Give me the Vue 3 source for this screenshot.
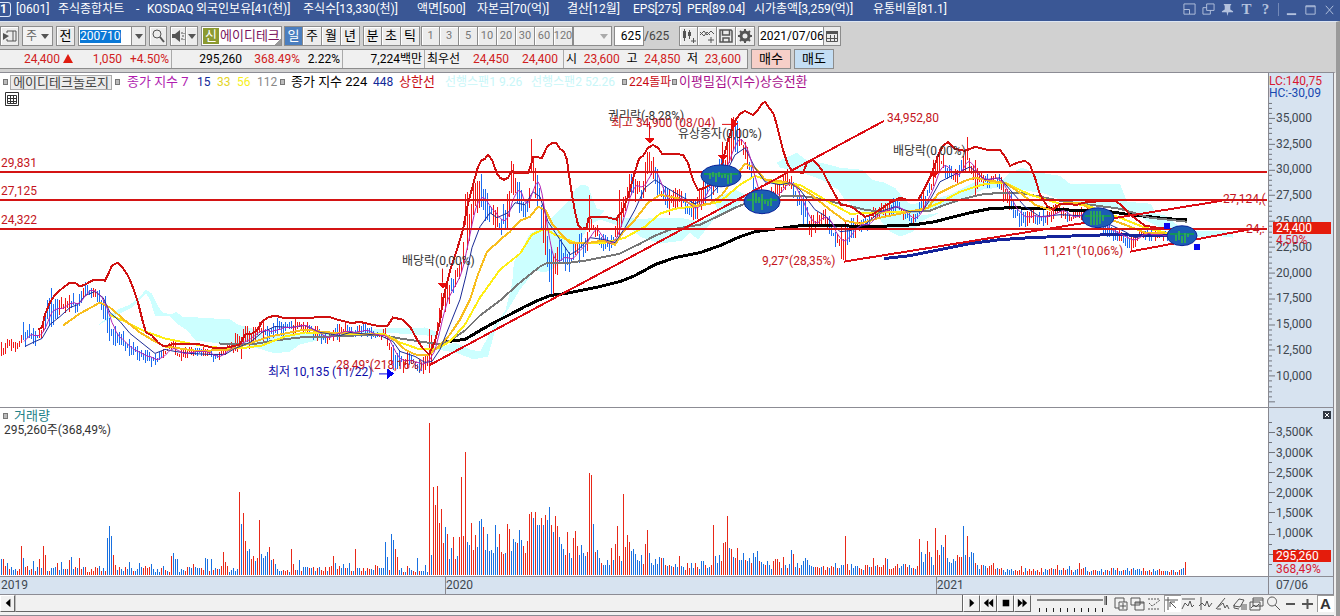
<script setup>
import { ref } from 'vue'

const titleParts = ['[0601]', '주식종합차트', '-', 'KOSDAQ', '외국인보유[41(천)]', '주식수[13,330(천)]', '액면[500]', '자본금[70(억)]', '결산[12월]', 'EPS[275]', 'PER[89.04]', '시가총액[3,259(억)]', '유통비율[81.1]']
const periods = ['일', '주', '월', '년']
const intraday = ['분', '초', '틱']
const minutes = ['1', '3', '5', '10', '20', '30', '60', '120']
const code = ref('200710')
const count = ref('625')
const date = ref('2021/07/06')
const zoomLevel = ref(100)

/* Plot areas, in chart units */
const PRICE = { x: 0, y: 73, w: 1268, h: 335 }
const VOL = { x: 0, y: 409, w: 1268, h: 167 }

const curves = [
  { name: 'ma448', color: '#14239a', width: 3, pts: '884,259 910,256 940,250 970,244 1000,240 1030,238 1080,236 1110,235 1165,236 1190,236' },
  { name: 'ma224', color: '#000', width: 3, pts: '443,343 455,341 465,340 480,331 498,321 510,315 525,307 540,300 550,296 565,294 580,291 600,287 620,282 635,276 655,265 675,258 700,253 720,246 740,237 755,232 770,230 785,228 800,226 840,226 870,227 895,226 915,225 935,222 950,218 970,213 990,209 1010,208 1050,209 1080,211 1110,212 1130,215 1150,217 1165,219 1187,220' },
  { name: 'ma112', color: '#777', width: 2, pts: '219,344 240,345 258,344 275,341 300,338 330,337 355,336 385,336 400,339 420,342 440,345 450,341 465,331 480,316 500,301 520,283 540,267 548,263 570,263 585,261 600,258 620,254 640,244 655,236 670,230 700,225 715,218 735,208 750,202 775,197 800,196 820,199 840,204 865,210 880,212 905,212 930,211 945,205 960,200 980,195 1000,193 1020,193 1040,197 1060,201 1090,205 1120,209 1150,218 1187,222' },
  { name: 'ma56', color: '#ffee14', width: 2, pts: '109,315 125,322 145,332 165,339 190,344 215,348 240,349 262,346 285,337 305,333 340,334 385,335 400,343 420,350 438,349 450,342 465,325 480,298 500,270 520,254 532,235 545,229 555,235 575,243 605,243 625,238 645,227 660,214 675,209 700,206 720,202 740,185 755,176 775,183 800,185 830,203 850,214 880,213 920,211 940,203 960,192 985,184 1005,183 1030,195 1060,204 1085,205 1120,218 1145,228 1170,234' },
  { name: 'ma33', color: '#f8be1e', width: 2, pts: '63,326 80,314 100,303 110,308 125,321 140,333 155,342 165,347 180,349 200,352 212,351 228,351 240,347 255,342 270,337 290,333 305,330 320,332 340,334 360,334 385,336 395,341 405,350 415,355 428,356 440,346 450,335 460,320 470,300 478,275 487,252 495,245 500,240 510,232 520,221 530,217 538,207 545,210 552,224 560,233 570,243 590,243 603,241 615,245 622,234 635,220 648,203 660,195 680,199 695,206 710,204 722,195 735,177 745,164 755,168 765,180 785,182 795,186 810,194 830,210 845,221 860,224 880,218 910,212 928,208 938,194 950,188 965,181 975,178 990,181 1005,183 1020,193 1035,205 1050,210 1065,203 1080,203 1105,218 1125,225 1145,233 1165,233' },
  { name: 'ma15', color: '#1a2a96', width: 1, pts: '25,347 33,343 42,339 50,325 60,317 70,308 78,305 85,296 95,292 103,298 110,313 120,322 130,334 145,346 155,354 165,350 175,352 190,354 210,355 225,355 235,349 250,343 262,333 275,327 290,328 305,326 320,333 340,336 350,333 380,336 393,342 400,352 415,357 425,363 432,362 440,350 450,325 460,300 466,276 472,248 480,227 490,213 497,218 508,213 515,203 525,205 533,192 540,197 548,222 560,240 570,255 577,251 590,238 605,240 615,243 625,228 635,210 645,188 655,180 665,187 680,196 695,204 710,196 720,185 735,155 745,148 755,168 765,182 780,185 790,183 800,190 815,210 825,216 840,232 850,231 865,225 880,212 895,207 910,212 922,212 930,200 940,182 950,177 960,172 970,167 985,180 1000,178 1010,190 1025,207 1040,217 1060,215 1080,216 1095,215 1110,225 1125,232 1135,238 1150,235 1170,237 1190,237' },
]
const upper = '38,330 42,328 45,315 50,303 55,295 62,289 70,283 76,284 80,287 85,285 92,281 98,280 105,281 108,275 112,266 118,263 122,267 128,276 133,288 138,303 143,323 146,333 152,336 158,343 164,347 172,345 200,345 208,347 215,349 228,348 240,345 245,335 252,334 258,330 262,322 268,318 275,316 282,318 300,319 328,317 337,320 353,324 358,322 367,324 380,327 387,327 393,318 402,320 410,327 417,340 422,348 429,355 435,342 440,322 443,300 450,271 457,250 463,230 467,208 473,185 478,167 481,161 485,159 488,155 492,160 497,174 500,178 504,180 508,178 512,171 515,173 528,173 531,165 533,157 542,158 547,147 552,143 556,143 560,149 564,152 567,160 569,175 572,195 575,212 578,225 582,229 587,228 588,219 592,217 605,217 617,220 618,216 622,212 627,200 630,190 635,172 639,159 643,156 648,148 653,145 658,148 662,154 673,154 683,155 688,163 693,180 698,190 705,188 715,182 722,165 728,140 735,121 740,114 745,111 753,115 758,110 762,104 765,102 770,109 774,115 778,130 783,150 788,165 793,172 803,173 807,163 813,160 818,165 823,172 828,182 835,195 841,205 848,206 853,208 865,217 872,215 880,210 890,203 900,198 907,200 918,200 923,192 930,178 935,165 938,155 943,146 948,142 955,149 965,151 975,147 987,150 1000,150 1005,157 1010,166 1017,163 1025,161 1030,165 1035,178 1040,195 1047,206 1053,210 1060,204 1077,205 1083,203 1090,202 1115,201 1122,206 1130,215 1137,220 1145,226 1157,228 1167,229'

const clouds = [
  '98,326 108,317 118,310 130,305 140,297 146,290 152,294 158,307 163,313 172,315 176,312 182,317 230,320 238,325 255,330 266,338 285,334 330,334 385,329 425,328 440,334 440,337 385,333 330,338 300,345 290,352 275,354 258,349 240,346 220,344 196,341 186,330 178,325 170,317 155,316 150,300 146,294 132,308 112,318',
  '425,345 440,348 455,343 470,350 480,352 495,325 505,312 512,285 514,262 522,249 530,234 545,225 555,215 565,205 568,202 575,190 581,185 588,186 592,198 597,209 605,211 600,216 640,219 680,218 700,222 720,213 712,200 735,190 746,195 738,205 715,218 698,240 690,233 682,241 660,244 640,237 632,230 600,220 590,225 578,245 555,268 545,273 535,271 520,290 508,310 496,328 488,357 474,360 455,353 430,349',
  '777,163 785,158 797,153 806,160 830,165 840,168 862,170 872,180 885,183 895,188 903,198 911,205 920,216 940,213 920,222 913,232 900,237 890,232 880,220 860,211 845,200 838,190 822,180 800,172 780,168',
  '885,210 920,203 950,195 975,182 1000,183 1010,173 1022,168 1033,172 1060,176 1070,184 1120,184 1127,202 1151,204 1156,214 1166,216 1178,226 1190,231 1233,232 1233,238 1215,236 1190,238 1160,228 1130,212 1100,206 1070,204 1045,194 1010,188 985,189 955,203 920,213',
]

/* x, high, low */
const range = [
  [0,346,360],[10,338,350],[18,344,354],[22,325,345],[30,326,345],[40,330,345],[44,303,335],[50,290,325],[58,302,320],[62,297,315],[70,291,312],[78,300,315],[82,280,300],[86,285,296],[92,284,298],[98,290,303],[105,298,325],[110,320,345],[118,330,348],[128,340,358],[138,347,360],[150,353,366],[157,356,366],[163,350,358],[172,340,352],[178,350,362],[190,347,357],[205,348,356],[215,354,364],[225,345,356],[232,340,352],[240,328,358],[246,330,350],[258,320,340],[270,325,340],[280,318,337],[290,322,335],[298,317,332],[305,322,333],[315,325,340],[325,333,346],[335,325,342],[345,324,338],[355,330,338],[360,322,336],[375,332,341],[385,330,340],[392,345,368],[400,352,373],[410,354,366],[418,362,372],[428,345,374],[435,330,350],[440,295,320],[448,278,305],[455,270,290],[462,250,275],[467,195,250],[472,190,230],[478,165,210],[484,190,225],[492,200,222],[500,215,238],[508,195,225],[512,165,195],[520,185,212],[526,210,225],[532,145,185],[538,175,205],[545,220,260],[552,245,295],[558,238,272],[565,248,270],[572,248,272],[578,228,260],[585,238,258],[590,208,235],[600,233,248],[610,237,256],[618,215,235],[624,192,220],[630,172,192],[636,170,200],[641,185,203],[648,150,180],[653,158,180],[660,182,205],[667,190,215],[680,190,205],[690,200,220],[697,198,218],[705,175,200],[715,165,195],[725,148,185],[733,118,155],[740,128,152],[748,148,172],[755,185,210],[765,190,212],[780,182,200],[787,168,188],[795,185,200],[803,195,225],[810,215,238],[818,212,228],[823,205,220],[830,220,235],[837,232,252],[844,225,260],[848,222,245],[858,215,232],[868,218,234],[874,205,220],[884,205,218],[890,200,215],[898,200,212],[905,212,222],[915,215,225],[922,195,210],[930,180,200],[935,160,182],[940,150,172],[946,162,178],[955,170,188],[960,158,178],[967,142,165],[973,165,190],[980,172,184],[988,175,188],[995,170,180],[1003,180,200],[1012,198,218],[1022,210,228],[1030,208,222],[1040,212,225],[1050,208,222],[1060,203,215],[1070,212,226],[1080,208,220],[1087,203,212],[1095,212,225],[1105,222,235],[1112,225,240],[1120,230,240],[1130,235,250],[1140,228,240],[1155,230,240],[1170,232,242],[1186,228,240],
]
/* single long wicks: x -> [high, low] */
const spikes = { 429: [330, 374], 465: [194, 225], 511: [161, 193], 531: [139, 172], 553: [255, 299], 589: [195, 232], 619: [190, 235], 733: [117, 150], 845: [221, 262], 967: [137, 160], 975: [160, 197], 1131: [235, 252] }

let seed = 11
const rnd = () => (seed = (seed * 16807) % 2147483647) / 2147483647
const candles = []
let run = 0
let rising = true
for (let x = 1, k = 0; x <= 1186; x += 2) {
  while (k < range.length - 2 && range[k + 1][0] < x) k++
  const [x0, h0, l0] = range[k]
  const [x1, h1, l1] = range[k + 1]
  const t = (x - x0) / (x1 - x0)
  const hi = h0 + (h1 - h0) * t
  const lo = l0 + (l1 - l0) * t
  const size = lo - hi
  let top = hi + size * (rnd() * 0.6 - 0.15)
  let bottom = lo - size * (rnd() * 0.6 - 0.15)
  if (spikes[x]) [top, bottom] = spikes[x]
  if (run-- <= 0) {
    rising = h1 + l1 < h0 + l0 ? rnd() < 0.75 : rnd() < 0.25
    run = Math.floor(rnd() * 4)
  }
  candles.push({ x, top: Math.round(top), h: Math.round(bottom) - Math.round(top), mid: (hi + lo) / 2, color: rising || x in spikes ? '#f01818' : '#1c6cf0' })
}
const ma7 = candles.slice(12).map((c, i) => {
  const w = candles.slice(i + 7, i + 13)
  return `${c.x - 1},${Math.round(w.reduce((s, v) => s + v.mid, 0) / w.length)}`
}).join(' ')

const levels = [172, 200, 229]
const trends = [[429, 366, 884, 121], [844, 262, 1222, 201], [1130, 252, 1248, 230]]
const zones = [[721, 176, 20, 11], [762, 202, 18, 12], [1098, 218, 16, 10], [1182, 236, 15, 10]]
const zoneWicks = zones.map(([cx, cy, rx, ry]) => {
  let d = ''
  for (let x = cx - rx + 9; x < cx + rx - 8; x += 3) d += `M${x} ${Math.round(cy - ry * 0.8 * rnd())}V${Math.round(cy + ry * 0.8 * rnd())}`
  return d
})
const downArrows = [[442, 269, 283], [649, 122, 138], [722, 142, 155], [933, 160, 172]]

const notes = [
  { t: '배당락(0,00%)', x: 402, y: 261, c: 'ink' },
  { t: '최저 10,135 (11/22)', x: 268, y: 373, c: 'navy' },
  { t: '28,49°(218,16%)', x: 336, y: 366, c: 'red' },
  { t: '권리락(-8,28%)', x: 608, y: 116, c: 'ink' },
  { t: '최고 34,900 (08/04)', x: 611, y: 123, c: 'red' },
  { t: '유상증자(0,00%)', x: 678, y: 134, c: 'ink' },
  { t: '배당락(0,00%)', x: 893, y: 151, c: 'ink' },
  { t: '34,952,80', x: 887, y: 118, c: 'red' },
  { t: '9,27°(28,35%)', x: 762, y: 261, c: 'red' },
  { t: '11,21°(10,06%)', x: 1043, y: 251, c: 'red' },
  { t: '29,831', x: 1, y: 163, c: 'red' },
  { t: '27,125', x: 1, y: 191, c: 'red' },
  { t: '24,322', x: 1, y: 220, c: 'red' },
  { t: '27,124,(', x: 1223, y: 199, c: 'red' },
  { t: '24,:', x: 1246, y: 229, c: 'red' },
]
const pct = (v) => `${v * 100}%`
const noteStyle = (n) => ({ left: pct(n.x / PRICE.w), top: pct((n.y - PRICE.y) / PRICE.h) })

const priceTicks = ['35,000', '32,500', '30,000', '27,500', '25,000', '22,500', '20,000', '17,500', '15,000', '12,500', '10,000'].map((t, i) => ({ t, y: 118 + i * 25.83 }))
const volTicks = ['3,500K', '3,000K', '2,500K', '2,000K', '1,500K', '1,000K', '500K'].map((t, i) => ({ t, y: 433 + i * 20.1 }))
const priceTop = (y) => ({ top: pct((y - PRICE.y) / PRICE.h) })
const volTop = (y) => ({ top: pct((y - VOL.y) / VOL.h) })
let priceTickPath = ''
for (let i = -3; i <= 55; i++) {
  const y = Math.round(118 + i * 5.166) + 0.5
  priceTickPath += `M0 ${y}H${i % 5 === 0 ? 6 : 3}`
}
let volTickPath = ''
for (let i = -1; i <= 13; i++) {
  const y = Math.round(433 + i * 10.05) + 0.5
  volTickPath += `M0 ${y}H${i % 2 === 0 ? 6 : 3}`
}

/* x : height, colour */
const volumePeaks = '0:16b 2:16r 4:9r 6:12b 8:6r 21:29r 23:17b 25:8r 33:14b 39:16r 43:29r 45:20r 57:12r 61:13b 69:15r 71:18b 79:17r 106:37b 108:48b 110:39b 112:20r 114:10r 128:13b 138:12b 150:11b 170:19r 172:22b 174:16b 176:16b 193:11r 205:17b 207:16b 211:16b 223:23r 225:13r 239:82r 241:50b 243:61r 245:34r 247:24b 249:26b 251:16r 253:19r 255:14b 257:17r 259:54r 261:21b 263:17b 265:19b 267:23b 269:28r 271:15b 273:16r 275:11b 290:26r 292:11r 298:15b 332:19r 334:12b 342:11b 348:12b 354:26r 374:10r 385:33b 387:18b 391:41b 393:35b 395:26r 397:18r 417:17b 425:10b 429:151r 431:20b 433:87r 435:69r 437:88r 439:51r 441:65r 443:32r 445:47b 447:41r 449:16b 451:27b 453:38r 455:16r 457:19b 459:38r 461:97r 463:39r 465:122r 467:33b 469:30b 471:51r 473:25r 475:40r 477:28b 479:53b 481:55b 483:47r 485:25b 487:41b 489:24b 491:25b 493:22b 495:49b 497:28b 499:41r 501:23r 503:21r 505:22b 507:50r 509:45r 511:24b 513:36b 515:33b 517:32r 519:44b 521:35b 523:29r 525:22r 527:34r 529:60r 531:62r 533:56b 535:62r 537:49b 539:49b 541:56r 543:49b 545:59r 547:54b 549:67b 551:49r 553:42b 555:58r 557:48r 559:38b 561:31b 563:26b 565:20r 567:42r 569:22b 571:17b 573:37r 575:43r 577:29r 579:20b 581:30b 583:22b 585:19b 587:23r 589:101r 591:99r 593:50b 595:23r 597:25b 599:17b 601:12r 603:10b 605:10b 607:15b 609:10b 611:27r 613:15b 615:31r 617:48r 619:19r 621:14b 623:80r 625:28r 627:40r 629:33r 631:24b 633:26b 635:21b 637:15b 639:14b 641:20b 643:11r 645:31r 647:44r 649:22b 651:12b 653:10b 655:16b 657:11b 659:18b 661:17r 663:17b 665:10r 667:9b 669:10r 671:9b 678:19r 680:9b 686:12r 690:12b 694:12r 700:14b 702:14b 712:49r 714:19b 716:12b 718:20b 720:14r 722:32r 724:33r 726:58r 728:27b 730:26r 732:18b 734:17r 736:27r 738:15b 740:15b 742:22b 744:15r 746:14b 748:17b 750:12r 752:22b 755:18b 757:24b 759:14r 761:13b 766:14b 773:14r 775:16r 777:16r 779:13r 783:18r 785:10b 791:25b 793:21r 797:12b 801:10b 803:14b 805:17b 807:15b 835:12b 843:10b 845:39r 847:11r 872:17r 882:10r 884:17r 886:16b 896:11r 918:36r 920:23b 922:13b 924:21b 926:34r 928:23r 930:18b 932:10b 934:46r 936:25r 938:20r 940:30b 942:28b 945:40r 947:17b 949:13b 951:12b 953:16b 955:14b 957:20r 959:18r 961:18r 963:48b 965:20b 967:39r 969:18b 971:23b 973:22b 975:12r 977:10b 981:10r 991:10r 993:12r 1021:9r 1056:10r 1068:9b 1078:12r 1084:8b 1112:7b 1184:13r'
const volBars = Array.from({ length: 593 }, (_, i) => {
  const x = i * 2
  const base = x > 1000 ? 3 : x > 430 && x < 1000 ? 5 : 3
  return { x: x + 1, h: base + Math.round(rnd() * (x > 1000 ? 4 : 6)), up: rnd() < 0.45 }
})
volumePeaks.split(' ').forEach((p) => {
  const [x, v] = p.split(':')
  const bar = volBars[Math.floor(x / 2)]
  bar.h = parseInt(v)
  bar.up = v.endsWith('r')
})

const tools = [
  { n: '창 추가', d: 'M2 2h9v4M2 2v10h4M6 6h8v8H6zM10 7v6M7 10h6' },
  { n: '창 겹치기', d: 'M1 2h9v7H1zM5 6h9v8H5zM5 7h9' },
  { n: '영역 선택', d: 'M1 3h12M1 13h12M2 7l3 3 3-2 5-4', dash: true },
  { n: '추세 도구', d: 'M1 4h13M4 1v13M6 6l6 6M6 6v5M6 6h5', on: true },
  { n: '고점 표시', d: 'M1 3h13M1 13l3-6 3 3 2-5 2 6 2-2' },
  { n: '파동선', d: 'M3 1v13M1 10l3-3 3 3 2-5 2 6 3-4' },
  { n: '각도선', d: 'M1 13L10 2M3 11l5-4 2 5 2-3 2 4M2 13h4' },
  { n: '전체 지우기', d: 'M2 9l5-6 5 1-4 7-6-1zM2 9v3l5 1M10 8v6M12 8v6M14 8v6' },
  { n: '차트 복사', d: 'M4 2h10v8H4zM4 4h10M1 6h10v8H1zM2 12l3-3 2 2 3-3' },
  { n: '돋보기', d: 'M6 1a4.500 4.500 0 1 0 .1 0M9 9l5 5' },
  { n: '축소', d: 'M3 8h9', bold: true },
  { n: '확대', d: 'M2 8h11M7.500 3v10', bold: true },
]
</script>

<template>
  <div class="window">
    <header class="title">
      <span class="badge">1</span>
      <h1><span v-for="p in titleParts" :key="p">{{ p }}</span></h1>
      <nav class="win-buttons">
        <button aria-label="크기 조절"><svg viewBox="0 0 14 14"><path d="M1 7V1h12v11H7M1 7h6v5H1z" /></svg></button>
        <button aria-label="복제"><svg viewBox="0 0 14 14"><path d="M5 1h8v7H5zM5 5H1v7h8V8" /></svg></button>
        <button aria-label="고정"><svg viewBox="0 0 14 14"><path class="solid" d="M3 1h8v1l-1 1v4l3 2v1H8l-1 4-1-4H1V9l3-2V3L3 2z" /></svg></button>
        <button class="serif">T</button>
        <button class="serif">?</button>
        <i class="bar"></i>
        <button aria-label="최소화"><svg viewBox="0 0 14 14"><path d="M2 12h10" stroke-width="2" /></svg></button>
        <button aria-label="최대화"><svg viewBox="0 0 14 14"><path d="M2 3h10v9H2zM2 4h10" /></svg></button>
        <button aria-label="닫기"><svg viewBox="0 0 14 14"><path d="M3 3l8 9M11 3l-8 9" /></svg></button>
      </nav>
    </header>

    <div class="body">
      <div class="toolbar">
        <button class="btn" aria-label="목록"><svg viewBox="0 0 16 16"><path d="M5 3h9v10H5M11 3v10M5 13V11M5 5V3" /><path class="solid" d="M1 5l6 3-6 4z" /></svg></button>
        <label class="pick market"><select aria-label="구분"><option>주</option></select><i class="caret"></i></label>
        <button class="btn">전</button>
        <span class="code-box"><input v-model="code" class="code" aria-label="종목코드"><button class="drop" aria-label="종목 목록"><i class="caret"></i></button></span>
        <button class="btn icon16" aria-label="검색"><svg viewBox="0 0 16 16"><circle cx="7" cy="6" r="4" /><path d="M10 9l4 5" stroke-width="2" /></svg></button>
        <span class="pair">
          <button class="btn icon15" aria-label="음성"><svg viewBox="0 0 16 16"><path class="solid" d="M2 6h3l5-4v12l-5-4H2z" /><path d="M12 4v2M12 8h2M12 10v2M14 5v1M14 11v1" /></svg></button>
          <button class="btn narrow" aria-label="음성 설정"><i class="caret"></i></button>
        </span>
        <span class="stock"><b>신</b><span>에이디테크</span></span>
        <span class="pair periods"><button v-for="(p, i) in periods" :key="p" class="btn" :class="{ active: i === 0 }">{{ p }}</button></span>
        <span class="pair"><button v-for="p in intraday" :key="p" class="btn">{{ p }}</button></span>
        <span class="pair mins"><button v-for="m in minutes" :key="m" class="btn dim">{{ m }}</button><label class="pick custom"><select aria-label="분 설정" disabled><option></option></select><i class="caret faint"></i></label></span>
        <span class="count"><input v-model="count" aria-label="조회 개수"><span>/625</span></span>
        <span class="pair">
          <button class="btn" aria-label="차트 추가"><svg viewBox="0 0 16 16"><path d="M3.500 1v12M8.500 2v9M10 13h5M12.500 10v5" /><path class="solid" d="M2 3h3v7H2zM7 4h3v4H7z" /></svg></button>
          <button class="btn" aria-label="지표 추가"><svg viewBox="0 0 16 16"><path d="M1 7l4-4 3 4 4-4 3 3M1 4l4 4 3-4 3 3M9 12h6M12 9v6" /></svg></button>
          <button class="btn" aria-label="저장"><svg viewBox="0 0 16 16"><path d="M2 2h11l1 1v11H2zM4.500 2v5h7V2M5 14v-4h6v4" stroke-width="1.500" /></svg></button>
          <button class="btn" aria-label="설정"><svg viewBox="0 0 16 16"><circle cx="8" cy="8" r="4" stroke-width="3" /><path d="M8 1v3M8 12v3M1 8h3M12 8h3M3 3l2 2M11 11l2 2M13 3l-2 2M3 13l2-2" stroke-width="2" /></svg></button>
        </span>
        <span class="date"><input v-model="date" aria-label="기준일"><button aria-label="달력"><svg viewBox="0 0 16 16"><path d="M2.500 3.500h11v10h-11zM6.500 7v6M10.500 7v6M3 10.500h10" /><path class="solid" d="M2 3h12v3H2z" /></svg></button></span>
      </div>

      <div class="quotes">
        <div class="strip">
          <span class="cell c1"><em class="up q1">24,400</em><i class="tri"></i><em class="up q2">1,050</em><em class="up q3">+4.50%</em></span>
          <span class="cell c2"><em class="q4">295,260</em><em class="up q5">368.49%</em><em class="q6">2.22%</em></span>
          <span class="cell c3">7,224백만</span>
          <span class="cell c4"><em>최우선</em><em class="up">24,450</em><em class="up">24,400</em></span>
          <span class="cell c5"><em>시</em><em class="up">23,600</em><em>고</em><em class="up">24,850</em><em>저</em><em class="up">23,600</em></span>
        </div>
        <button class="order buy">매수</button>
        <button class="order sell">매도</button>
      </div>

      <main class="charts">
        <section class="pane price">
          <div class="plot">
            <svg class="canvas" viewBox="0 73 1268 335" preserveAspectRatio="none">
              <polygon v-for="c in clouds" :key="c" :points="c" fill="#ccffff" />
              <rect v-for="c in candles" :key="c.x" :x="c.x" :y="c.top" width="1" :height="c.h" :fill="c.color" />
              <polyline v-for="c in curves" :key="c.name" :points="c.pts" :stroke="c.color" :stroke-width="c.width" />
              <polyline :points="ma7" stroke="#b424b4" />
              <polyline :points="upper" stroke="#d01010" stroke-width="2" />
              <path v-for="y in levels" :key="y" :d="`M0 ${y}H1267`" stroke="#d41414" stroke-width="2" />
              <path v-for="t in trends" :key="t[0]" :d="`M${t[0]} ${t[1]}L${t[2]} ${t[3]}`" stroke="#dc0c14" stroke-width="2" />
              <g v-for="(z, i) in zones" :key="z[0]">
                <ellipse :cx="z[0]" :cy="z[1]" :rx="z[2]" :ry="z[3]" fill="#1c5cb4" stroke="#12289c" />
                <path :d="`M${z[0] - z[2] + 3} ${z[1] - 2}H${z[0] + z[2] - 3}`" stroke="#12945c" stroke-width="2" />
                <path :d="zoneWicks[i]" stroke="#2ca45c" stroke-width="2" />
              </g>
              <g v-for="a in downArrows" :key="a[0]">
                <path :d="`M${a[0] + 0.5} ${a[1]}V${a[2]}`" stroke="#e01010" />
                <path :d="`M${a[0] - 5} ${a[2]}h11l-5 6z`" fill="#e80c0c" />
              </g>
              <path d="M722 124.500H732" stroke="#e01010" /><path d="M731 118l7 6-7 7z" fill="#e80c0c" />
              <path d="M379 374.500H388" stroke="#0000e0" /><path d="M387 369l7 5-7 6z" fill="#0000f0" />
              <path d="M1164 223h6v6h-6zM1194 244h6v6h-6z" fill="#0808f0" />
            </svg>
            <div class="legend">
              <i class="dot"></i><span class="name">에이디테크놀로지</span><i class="dot"></i>
              <span class="magenta w1">종가 지수 7</span><span class="blue w2">15</span><span class="gold w2">33</span><span class="yellow w2">56</span><span class="gray w3">112</span><i class="dot"></i>
              <span class="w4">종가 지수 224</span><span class="blue w5">448</span><span class="crimson w6">상한선</span><span class="aqua w7">선행스팬1 9.26</span><span class="aqua w8">선행스팬2 52.26</span><i class="dot"></i><span class="crimson w9">224돌파</span><i class="dot"></i><span class="purple">이평밀집(지수)상승전환</span>
            </div>
            <button class="grid-btn" aria-label="데이터 표"><svg viewBox="0 0 14 14"><path d="M.5.500h13v13H.5zM2.500 3.500h9v8h-9zM5.500 3v9M8.500 3v9M2 6.500h10M2 9.500h10" /></svg></button>
            <span v-for="n in notes" :key="n.t + n.x" class="note" :class="n.c" :style="noteStyle(n)">{{ n.t }}</span>
          </div>
          <div class="axis">
            <svg class="ticks" viewBox="0 73 6 335" preserveAspectRatio="none"><path :d="priceTickPath" /></svg>
            <span v-for="t in priceTicks" :key="t.t" class="tick" :style="priceTop(t.y)">{{ t.t }}</span>
            <span class="lc">LC:140,75</span><span class="hc">HC:-30,09</span>
            <span class="flag" :style="priceTop(228)">24,400</span>
            <span class="rate" :style="priceTop(240)">4,50%</span>
          </div>
        </section>

        <section class="pane volume">
          <div class="plot">
            <svg class="canvas" viewBox="0 409 1268 167" preserveAspectRatio="none">
              <rect v-for="b in volBars" :key="b.x" :x="b.x" :y="575 - b.h" width="1" :height="b.h" :fill="b.up ? '#e82818' : '#1870e0'" />
            </svg>
            <div class="vol-head"><p><i class="dot"></i><span class="teal">거래량</span></p><p class="sum">295,260주(368,49%)</p></div>
          </div>
          <div class="axis">
            <svg class="ticks" viewBox="0 409 6 167" preserveAspectRatio="none"><path :d="volTickPath" /></svg>
            <span v-for="t in volTicks" :key="t.t" class="tick" :style="volTop(t.y)">{{ t.t }}</span>
            <span class="flag" :style="volTop(556)">295,260</span>
            <span class="rate" :style="volTop(569)">368,49%</span>
            <button class="shut" aria-label="거래량 닫기"><svg viewBox="0 0 8 8"><path d="M2 2l4 4M6 2L2 6" /></svg></button>
          </div>
        </section>

        <div class="dates"><div class="years"><span class="y19">2019</span><span class="y20">2020</span><span>2021</span></div><span class="today">07/06</span></div>

        <footer class="scroll">
          <button class="sb" aria-label="왼쪽"><svg viewBox="0 0 16 16"><path class="black" d="M10 3v9L5 7.500z" /></svg></button>
          <div class="track"></div>
          <button class="sb" aria-label="오른쪽"><svg viewBox="0 0 16 16"><path class="black" d="M6 3v9l5-4.500z" /></svg></button>
          <button class="sb" aria-label="뒤로"><svg viewBox="0 0 16 16"><path class="black" d="M8 3v9L3 7.500zM13 3v9L8 7.500z" /></svg></button>
          <button class="sb" aria-label="정지"><svg viewBox="0 0 16 16"><path class="black" d="M5 4h7v7H5z" /></svg></button>
          <button class="sb" aria-label="앞으로"><svg viewBox="0 0 16 16"><path class="black" d="M3 3v9l5-4.500zM8 3v9l5-4.500z" /></svg></button>
          <label class="slider"><input v-model="zoomLevel" type="range" aria-label="속도"><i></i></label>
          <div class="tools">
            <button v-for="t in tools" :key="t.n" :aria-label="t.n" :class="{ on: t.on }"><svg viewBox="0 0 16 16"><path :d="t.d" :stroke-width="t.bold ? 2 : 1" :stroke-dasharray="t.dash ? '2 1' : null" /></svg></button>
            <button class="auto on">A</button>
          </div>
        </footer>
      </main>
    </div>
  </div>
</template>

<style>
html, body { margin: 0; height: 100%; overflow: hidden; }
</style>

<style scoped>
* { box-sizing: border-box; }
.window { height: 100vh; display: flex; flex-direction: column; background: #d1d1d1; color: #000; font: 12px/16px Roboto, "Noto Sans CJK KR", sans-serif; white-space: nowrap; overflow: hidden; }
button, input, select { font: inherit; color: inherit; margin: 0; padding: 0; border: 0; background: none; border-radius: 0; outline: 0; min-width: 0; }
h1, p { margin: 0; font: inherit; }
em { font-style: normal; }
svg { display: block; fill: none; stroke: #555; }
.solid { fill: #555; stroke: none; }
.black { fill: #000; stroke: none; }

.title { flex: none; height: 21px; display: flex; align-items: center; background: #3a5795; color: #fff; padding-bottom: 3px; }
.badge { flex: none; width: 11px; height: 15px; border: 1px solid #dfe8fa; border-left: 0; border-radius: 0 3px 3px 0; line-height: 13px; font-weight: bold; }
h1 { flex: 1; margin-left: 5px; display: grid; grid-template-columns: 42px 78px 11px 49px 107px 114px 60px 90px 66px 54px 67px 119px auto; }
.win-buttons { display: flex; align-items: center; gap: 6px; padding-right: 4px; color: #b4c2de; }
.win-buttons button, .win-buttons svg { width: 13px; height: 13px; }
.win-buttons svg { stroke: #b4c2de; }
.win-buttons .solid { fill: #b4c2de; }
.win-buttons .serif { font: bold 15px/13px "Liberation Serif", serif; }
.bar { width: 1px; height: 13px; background: #7389b8; }

.body { flex: 1; min-height: 0; display: flex; flex-direction: column; border-right: 4px solid #9a9a9a; border-top: 1px solid #dde6f3; padding-top: 4px; }
.toolbar { flex: none; height: 20px; display: flex; gap: 3px; align-items: stretch; }
.btn { width: 19px; border: 1px solid #8c8c8c; background: #ececec; display: flex; align-items: center; justify-content: center; box-shadow: inset 1px 1px #fff; font-size: 13px; }
.btn svg { width: 16px; height: 16px; flex: none; }
.pair { display: flex; }
.pair .btn + .btn { border-left: 0; }
.icon16 { width: 18px; }
.icon15 { width: 16px; }
.narrow { width: 12px; }
.btn.active { background: #4a7ebf; color: #fff; box-shadow: none; }
.periods { margin-left: -1px; }
.btn.dim { color: #777; font-size: 11px; }
.mins { margin-left: -2px; }
.caret { width: 0; height: 0; border: 4px solid transparent; border-top: 5px solid #555; border-bottom: 0; }
.faint { border-top-color: #aaa; }
.pick { position: relative; display: flex; border: 1px solid #8c8c8c; background: #f2f2f2; }
.pick select { width: 100%; appearance: none; padding-left: 3px; opacity: 1; color: #666; }
.pick .caret { position: absolute; right: 3px; top: 7px; }
.market { width: 31px; }
.custom { width: 39px; }
.code-box { width: 68px; display: flex; border: 1px solid #8c8c8c; background: #fff; }
.code { flex: 1; width: 50px; background: linear-gradient(#0a78d6, #0a78d6) 1px 3px / 41px 13px no-repeat; color: #fff; padding-left: 1px; }
.drop { width: 14px; background: #ececec; border-left: 1px solid #8c8c8c; display: flex; align-items: center; justify-content: center; }
.stock { width: 81px; display: flex; border: 1px solid #8c8c8c; background: linear-gradient(135deg, transparent 50%, #999 50%) right bottom / 7px 7px no-repeat, #fff; color: #7a1460; line-height: 18px; font-size: 13px; }
.stock b { flex: none; width: 16px; margin: 1px 1px 1px 1px; line-height: 16px; background: #8c9a30; color: #fff; font-weight: normal; text-align: center; }
.count { display: flex; align-items: center; width: 62px; margin-left: -1px; color: #444; }
.count input { width: 30px; height: 20px; text-align: right; padding-right: 2px; border: 1px solid #8c8c8c; background: #fff; color: #000; }
.date { display: flex; width: 83px; border: 1px solid #8c8c8c; background: #fff; }
.date input { width: 64px; padding-left: 1px; }
.date button { flex: 1; border-left: 1px solid #8c8c8c; background: #ececec; }
.date svg { width: 16px; height: 16px; }

.quotes { flex: none; height: 20px; margin: 3px 0; display: flex; gap: 3px; }
.strip { width: 748px; display: flex; border: 1px solid #8c8c8c; border-left: 0; background: #f0f0f0; line-height: 18px; }
.cell { display: flex; border-right: 1px solid #aaa; }
.up { color: #d02020; }
.c1 { width: 172px; }
.q1 { width: 60px; text-align: right; }
.tri { align-self: flex-start; width: 0; height: 0; border: 5px solid transparent; border-bottom: 9px solid #e01c10; border-top: 0; margin: 4px 0 0 3px; }
.q2 { width: 49px; text-align: right; }
.q3 { flex: 1; text-align: right; padding-right: 2px; }
.c2 { width: 171px; }
.q4 { width: 70px; text-align: right; }
.q5 { width: 58px; text-align: right; }
.q6 { flex: 1; text-align: right; padding-right: 2px; }
.c3 { width: 82px; justify-content: flex-end; padding-right: 2px; }
.c4 { width: 139px; justify-content: space-between; padding: 0 5px 0 2px; }
.c5 { flex: 1; justify-content: space-between; padding: 0 6px 0 2px; border: 0; }
.order { width: 40px; border: 1px solid #8c8c8c; font-size: 13px; }
.buy { background: #f6cfc8; }
.sell { background: #c4def4; }

.charts { flex: 1; min-height: 0; display: flex; flex-direction: column; border-top: 1px solid #8c8c94; border-right: 2px solid #eee; }
.pane { display: flex; min-height: 0; background: #fff; }
.price { flex: 335 1 0; }
.volume { flex: 168 1 0; border-top: 1px solid #8c8c94; }
.plot { flex: 1; position: relative; min-width: 0; overflow: hidden; }
.canvas { position: absolute; inset: 0; width: 100%; height: 100%; stroke: none; shape-rendering: crispEdges; }
.axis { flex: none; width: 66px; position: relative; background: #d7e3f0; border-left: 1px solid #888890; border-right: 1px solid #888890; overflow: hidden; color: #404850; }
.ticks { position: absolute; left: 0; top: 0; width: 6px; height: 100%; stroke: #70747c; shape-rendering: crispEdges; }
.tick, .flag, .rate { position: absolute; left: 7px; transform: translateY(-50%); line-height: 12px; }
.flag { left: 4px; right: 2px; padding-left: 3px; background: #e41c0c; color: #fff; }
.rate, .lc { color: #d81830; }
.lc, .hc { position: absolute; left: 0; top: 2px; line-height: 12px; }
.hc { top: 14px; color: #1848b0; }
.shut { position: absolute; right: 2px; top: 3px; width: 8px; height: 8px; background: #303844; }
.shut svg { width: 8px; height: 8px; stroke: #fff; }
.note { position: absolute; transform: translateY(-50%); line-height: 14px; }
.ink { color: #333; }
.navy { color: #0c0ca8; }
.red { color: #c41420; }
.dot { flex: none; width: 5px; height: 6px; border: 1px solid #777; background: #bbb; }
.legend { position: absolute; left: 3px; top: 1px; display: flex; align-items: center; height: 16px; }
.name { margin: 0 3px 0 2px; border: 1px solid #aaa; background: #ececec; width: 102px; text-align: center; line-height: 13px; color: #444; font-size: 13px; }
.w1 { width: 70px; margin-left: 7px; }
.w2 { width: 20px; }
.w3 { width: 23px; }
.w4 { width: 82px; margin-left: 6px; }
.w5 { width: 26px; }
.w6 { width: 46px; }
.w7 { width: 86px; }
.w8 { width: 91px; }
.w9 { width: 43px; margin-left: 2px; }
.w1, .w4, .w6, .purple { font-size: 13px; }
.magenta { color: #b01cb0; }
.blue { color: #102898; }
.gold { color: #e4d428; }
.yellow { color: #f6f01c; }
.gray { color: #888; }
.crimson { color: #c80c14; }
.aqua { color: #c8f6f8; }
.purple { color: #a8108c; margin-left: 2px; }
.grid-btn { position: absolute; left: 5px; top: 19px; width: 14px; height: 14px; }
.grid-btn svg { stroke: #333; }
.vol-head { position: absolute; left: 3px; top: 1px; line-height: 14px; }
.vol-head p { display: flex; align-items: center; gap: 6px; }
.teal { color: #208088; font-size: 13px; }
.sum { color: #333; padding-left: 1px; }

.dates { flex: none; height: 19px; display: flex; background: #d7e3f0; border: 1px solid #8c8c94; border-left: 0; line-height: 16px; color: #404850; }
.years { flex: 1; display: flex; }
.years span { flex: 332 1 0; border-left: 1px solid #888890; }
.years .y19 { flex: 445 1 0; border: 0; padding-left: 1px; }
.years .y20 { flex: 491 1 0; }
.today { width: 65px; border-left: 1px solid #888890; padding-left: 7px; }

.scroll { flex: none; height: 21px; display: flex; background: #f1f1f1; padding-bottom: 3px; border-bottom: 1px solid #8c8c94; }
.sb { flex: none; width: 17px; height: 17px; background: #f1f1f1; border: 1px solid; border-color: #fff #666 #666 #fff; }
.sb svg { width: 15px; height: 15px; }
.sb:first-child { width: 15px; }
.track { flex: 1; border-bottom: 1px solid #666; border-left: 1px solid #bbb; border-right: 1px solid #666; }
.slider { flex: none; width: 70px; margin: 0 6px 0 6px; display: flex; flex-direction: column; }
.slider input { width: 70px; height: 11px; appearance: none; background: linear-gradient(#888, #888) 0 4px / 66px 2px no-repeat; }
.slider input::-webkit-slider-thumb { appearance: none; width: 3px; height: 9px; border-right: 1px solid #444; background: #999; }
.slider i { height: 4px; margin: 2px 0 0 2px; background: repeating-linear-gradient(90deg, #222 0 1px, transparent 1px 7px); }
.tools { flex: none; display: flex; width: 221px; }
.tools button { flex: 1; height: 17px; }
.tools svg { width: 16px; height: 16px; }
.tools .on { background: #fff; box-shadow: inset 1px 1px #999; }
.tools .auto { font: bold 15px/17px "Liberation Sans", sans-serif; color: #333; }
</style>
